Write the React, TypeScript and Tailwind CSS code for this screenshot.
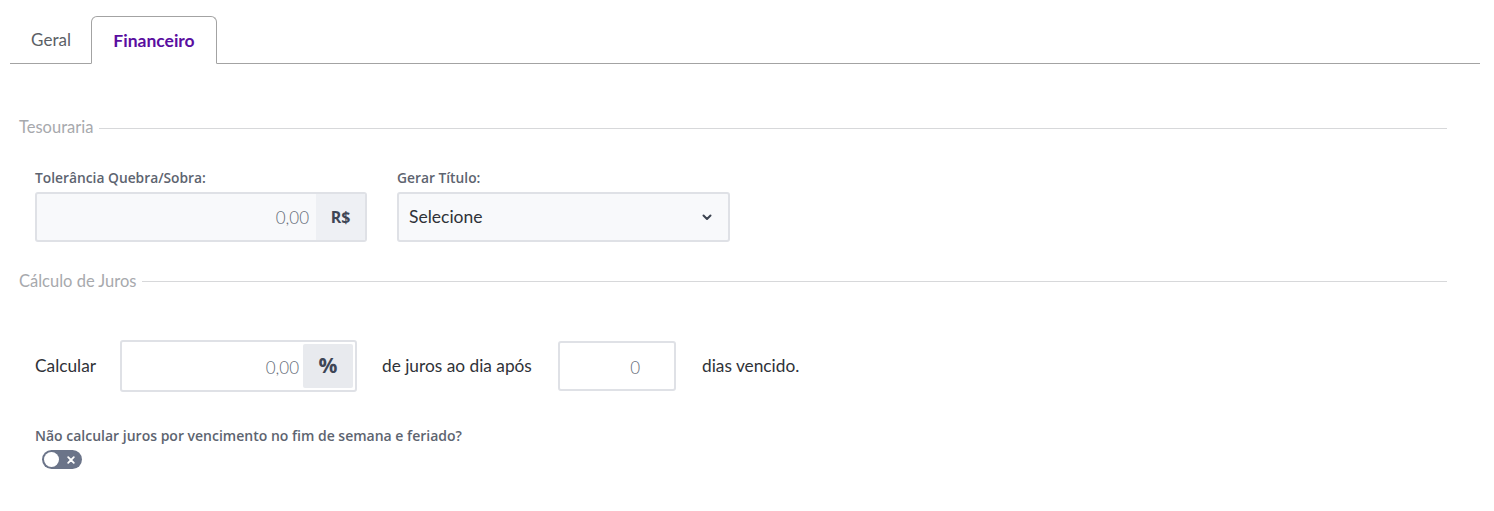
import React from "react";

const body = { fontFamily: "Lato, 'Open Sans', sans-serif" };
const label = { fontFamily: "'Open Sans', 'Noto Sans', sans-serif" };

function Legend({ text }: { text: string }) {
  return (
    <div className="flex items-center gap-[6px] pl-[19px] pr-[47px]">
      <span className="text-[16.5px] text-[#a7a9ad] leading-none" style={body}>{text}</span>
      <div className="flex-1 h-px bg-[#d7d8da] mt-[2px]" />
    </div>
  );
}

export default function App() {
  return (
    <div className="w-[1494px] h-[511px] bg-white" style={body}>
      {/* Tabs */}
      <div className="pt-[16px] px-[10px] pr-[14px]">
        <div className="flex items-end border-b border-[#a3a3a3] h-[48px]">
          <div className="w-[81px] h-full flex items-center justify-center text-[17px] text-[#5b5f66] pl-[1px]">Geral</div>
          <div className="w-[126px] h-[48px] -mb-px border border-[#a3a3a3] border-b-white bg-white rounded-t-[6px] flex items-center justify-center text-[17.5px] font-bold text-[#5a0ea0] pt-[3px]">
            Financeiro
          </div>
        </div>
      </div>

      {/* Tesouraria */}
      <div className="mt-[55px]">
        <Legend text="Tesouraria" />
      </div>

      <div className="flex gap-[30px] pl-[35px] mt-[33px]">
        <div className="flex flex-col">
          <label className="text-[13.8px] font-semibold text-[#5d6470] leading-[18px] mb-[5px]" style={label}>Tolerância Quebra/Sobra:</label>
          <div className="flex w-[332px] h-[50px] border-2 border-[#dfe1e6] rounded-[3px] bg-[#f8f9fb] overflow-hidden">
            <div className="flex-1 flex items-center justify-end pr-[7px] text-[17px] text-[#636a76] font-light pt-[3px]">0,00</div>
            <div className="w-[49px] bg-[#eef0f4] flex items-center justify-center text-[16px] font-bold text-[#3e4656]" style={label}>R$</div>
          </div>
        </div>
        <div className="flex flex-col">
          <label className="text-[13.8px] font-semibold text-[#5d6470] leading-[18px] mb-[5px]" style={label}>Gerar Título:</label>
          <div className="flex items-center w-[333px] h-[50px] border-2 border-[#dfe1e6] rounded-[3px] bg-[#f8f9fb] pl-[10px] pr-[16px]">
            <span className="flex-1 text-[17.5px] text-[#2f3238] pt-[2px]">Selecione</span>
            <svg width="10" height="7" viewBox="0 0 10 7" className="mt-[1px]">
              <path d="M1.5 1.5 L5 5 L8.5 1.5" fill="none" stroke="#3c4350" strokeWidth="2" strokeLinecap="round" strokeLinejoin="round" />
            </svg>
          </div>
        </div>
      </div>

      {/* Cálculo de Juros */}
      <div className="mt-[31px]">
        <Legend text="Cálculo de Juros" />
      </div>

      <div className="flex items-center pl-[35px] mt-[51px] h-[52px]">
        <span className="text-[17.3px] text-[#2f3238] w-[85px]">Calcular</span>
        <div className="flex w-[237px] h-[52px] border-2 border-[#dfe1e6] rounded-[3px] bg-white overflow-hidden">
          <div className="flex-1 flex items-center justify-end pr-[4px] text-[17px] text-[#636a76] font-light pt-[3px]">0,00</div>
          <div className="w-[50px] my-[2px] mr-[2px] bg-[#e8eaee] rounded-[2px] flex items-center justify-center text-[21px] font-bold text-[#3e4656]" style={label}>%</div>
        </div>
        <span className="text-[17.3px] text-[#2f3238] ml-[25px] w-[176px]">de juros ao dia após</span>
        <div className="w-[118px] h-[50px] border-2 border-[#dfe1e6] rounded-[3px] bg-white flex items-center justify-end pr-[34px] text-[17px] text-[#636a76] font-light pt-[3px]">0</div>
        <span className="text-[17.3px] text-[#2f3238] ml-[26px]">dias vencido.</span>
      </div>

      <div className="pl-[35px] mt-[35px]">
        <div className="text-[14px] font-semibold text-[#5d6470] leading-[18px]" style={label}>Não calcular juros por vencimento no fim de semana e feriado?</div>
        <div className="mt-[5px] ml-[7px] w-[40px] h-[19px] rounded-full bg-[#6b7489] flex items-center justify-between pl-[2px] pr-[7px]">
          <div className="w-[15px] h-[15px] rounded-full bg-white" />
          <svg width="8" height="8" viewBox="0 0 8 8">
            <path d="M1.2 1.2 L6.8 6.8 M6.8 1.2 L1.2 6.8" stroke="white" strokeWidth="1.8" strokeLinecap="round" />
          </svg>
        </div>
      </div>
    </div>
  );
}
